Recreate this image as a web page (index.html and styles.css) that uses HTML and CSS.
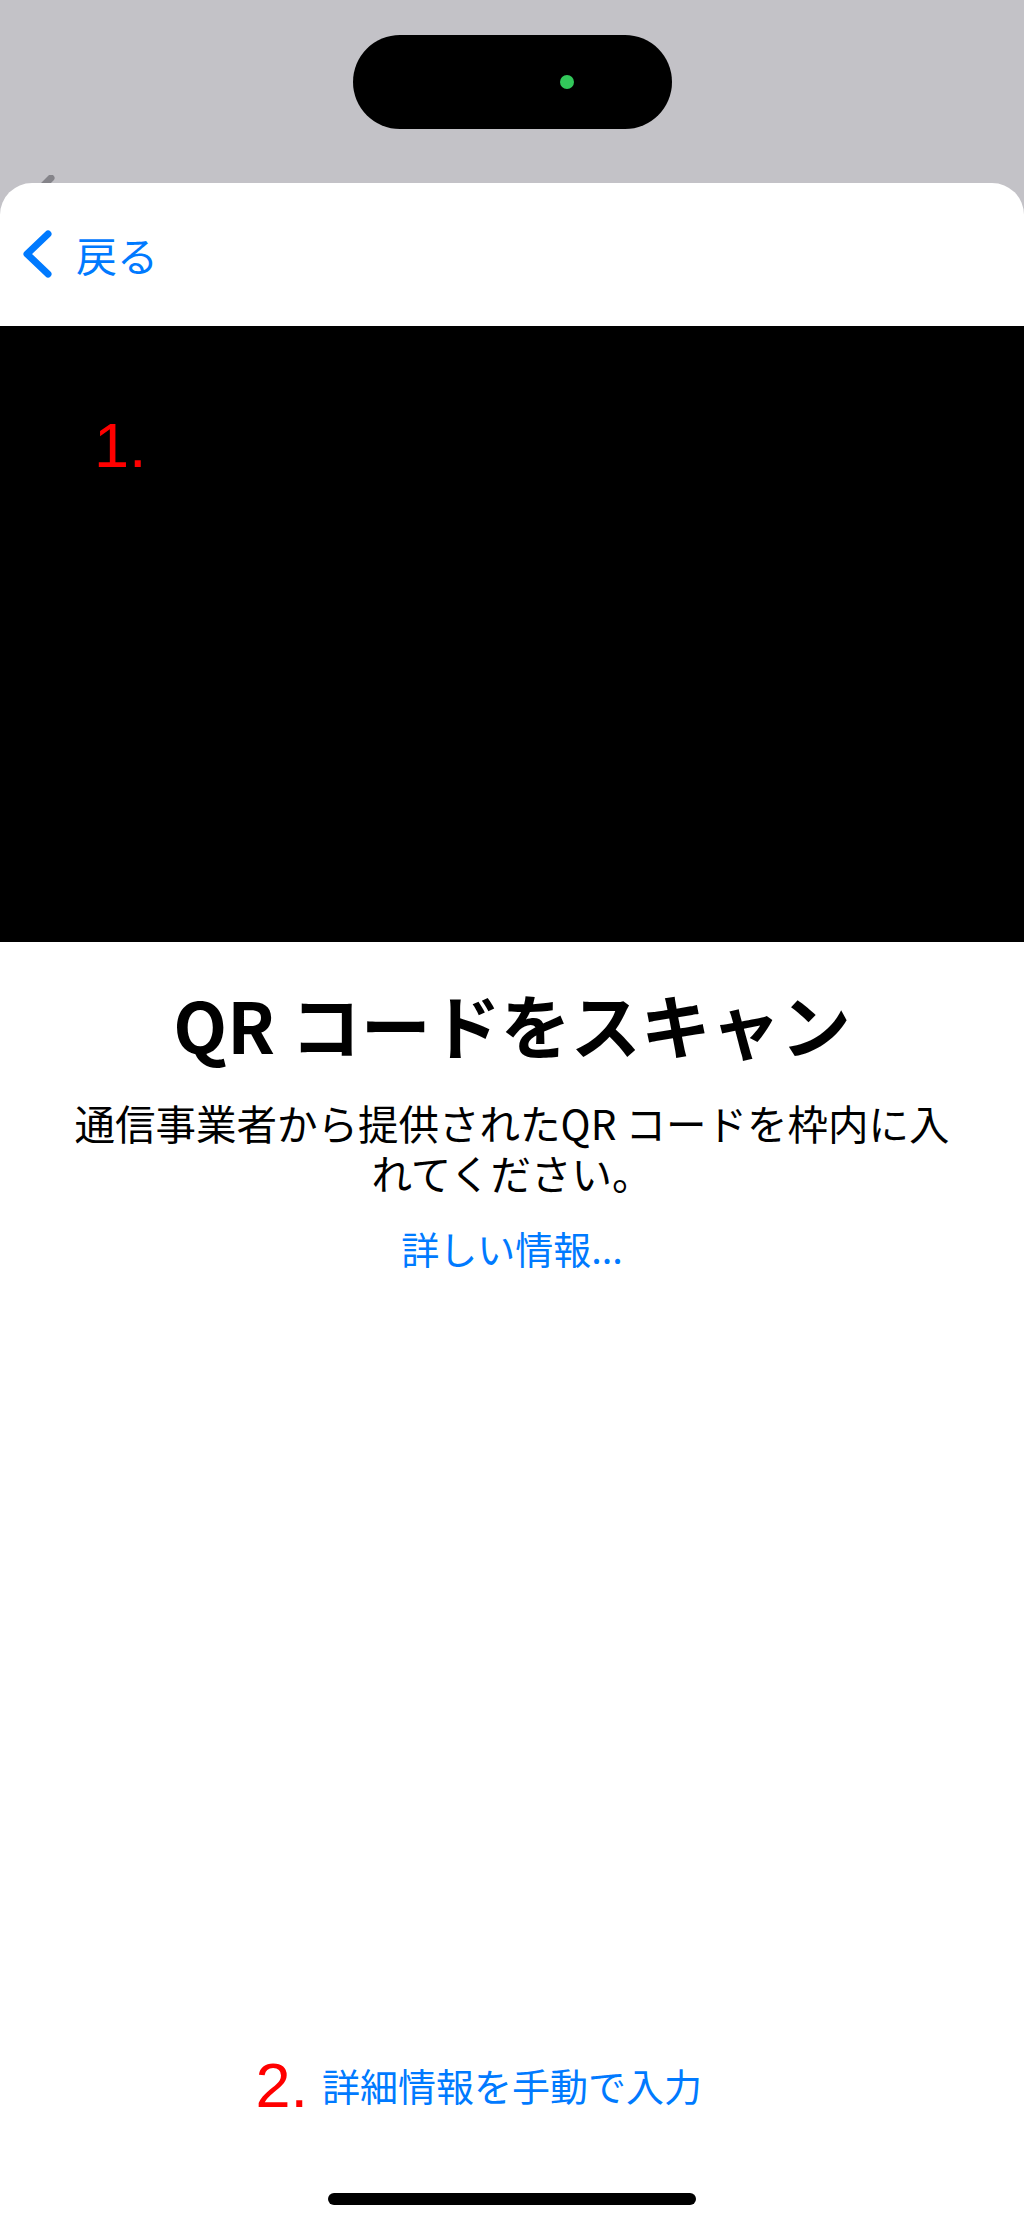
FILE: index.html
```html
<!DOCTYPE html>
<html lang="ja">
<head>
<meta charset="utf-8">
<title>QRコードをスキャン</title>
<link rel="stylesheet" href="styles.css">
</head>
<body>
<div class="screen">
  <div class="top">
    <div class="island"><span class="cam-dot"></span></div>
    <div class="peek">
      <svg class="peek-chev" width="40" height="30" viewBox="0 0 40 30"><path d="M15 3 L2 16" fill="none" stroke="#85848a" stroke-width="7" stroke-linecap="round"/></svg>
      <span class="peek-label">設定</span>
    </div>
  </div>
  <div class="sheet">
    <div class="nav">
      <div class="back">
        <svg class="chev" width="40" height="56" viewBox="0 0 40 56"><path d="M30 8 L9 28 L30 48" fill="none" stroke="#007aff" stroke-width="7" stroke-linecap="round" stroke-linejoin="round"/></svg>
        <span class="back-label">戻る</span>
      </div>
    </div>
    <div class="camera">
      <span class="anno">1.</span>
    </div>
    <h1 class="title">QR コードをスキャン</h1>
    <p class="desc">通信事業者から提供されたQR コードを枠内に入<br>れてください。</p>
    <p class="more">詳しい情報...</p>
    <div class="spacer"></div>
    <div class="manual-row">
      <span class="manual"><span class="anno anno2">2.</span>詳細情報を手動で入力</span>
    </div>
    <div class="home-bar"></div>
  </div>
</div>
</body>
</html>
```

FILE: styles.css
```css
html, body {
  margin: 0;
  padding: 0;
}
body {
  font-family: "Noto Sans CJK JP", sans-serif;
  background: #ffffff;
}
.screen {
  width: 1024px;
  height: 2226px;
  display: flex;
  flex-direction: column;
  background: #c3c2c7;
  overflow: hidden;
}
.top {
  height: 183px;
  flex: none;
  display: flex;
  flex-direction: column;
  align-items: center;
}
.island {
  margin-top: 35px;
  width: 319px;
  height: 94px;
  border-radius: 47px;
  background: #000;
  position: relative;
}
.cam-dot {
  position: absolute;
  left: 207px;
  top: 40px;
  width: 14px;
  height: 14px;
  border-radius: 50%;
  background: #32c75a;
}
.peek {
  align-self: stretch;
  margin-top: 46px;
  height: 8px;
  overflow: hidden;
  display: flex;
  align-items: flex-start;
}
.peek-chev {
  margin-left: 36px;
  flex: none;
}
.peek-label {
  margin-left: 4px;
  margin-top: 6px;
  font-size: 40px;
  line-height: 40px;
  color: #85848a;
}
.sheet {
  flex: 1;
  background: #ffffff;
  border-radius: 32px 32px 0 0;
  display: flex;
  flex-direction: column;
}
.nav {
  height: 143px;
  flex: none;
  box-sizing: border-box;
  padding-top: 43px;
  padding-left: 18px;
}
.back {
  display: flex;
  align-items: center;
  height: 56px;
}
.chev {
  flex: none;
  display: block;
}
.back-label {
  margin-left: 18px;
  font-size: 41px;
  line-height: 56px;
  color: #007aff;
}
.camera {
  height: 616px;
  flex: none;
  background: #000;
  box-sizing: border-box;
  padding-top: 88px;
  padding-left: 94px;
}
.anno {
  font-family: "Liberation Sans", Arial, sans-serif;
  font-size: 63px;
  line-height: 62px;
  color: #ff0000;
  display: block;
}
.title {
  margin: 40px 0 0;
  text-align: center;
  font-size: 70px;
  line-height: 84px;
  font-weight: 700;
  color: #000;
}
.desc {
  margin: 32px 0 0;
  padding: 0 30px;
  text-align: center;
  font-size: 40.5px;
  line-height: 50px;
  color: #000;
}
.more {
  margin: 25px 0 0;
  text-align: center;
  font-size: 38px;
  line-height: 50px;
  color: #007aff;
}
.spacer {
  flex: 1;
}
.manual-row {
  display: flex;
  justify-content: center;
  flex: none;
}
.manual {
  position: relative;
  font-size: 38px;
  line-height: 50px;
  color: #007aff;
}
.anno2 {
  position: absolute;
  right: calc(100% + 14px);
  top: -6px;
  white-space: nowrap;
}
.home-bar {
  flex: none;
  align-self: center;
  margin-top: 83px;
  margin-bottom: 21px;
  width: 368px;
  height: 12px;
  border-radius: 6px;
  background: #000;
}
```
